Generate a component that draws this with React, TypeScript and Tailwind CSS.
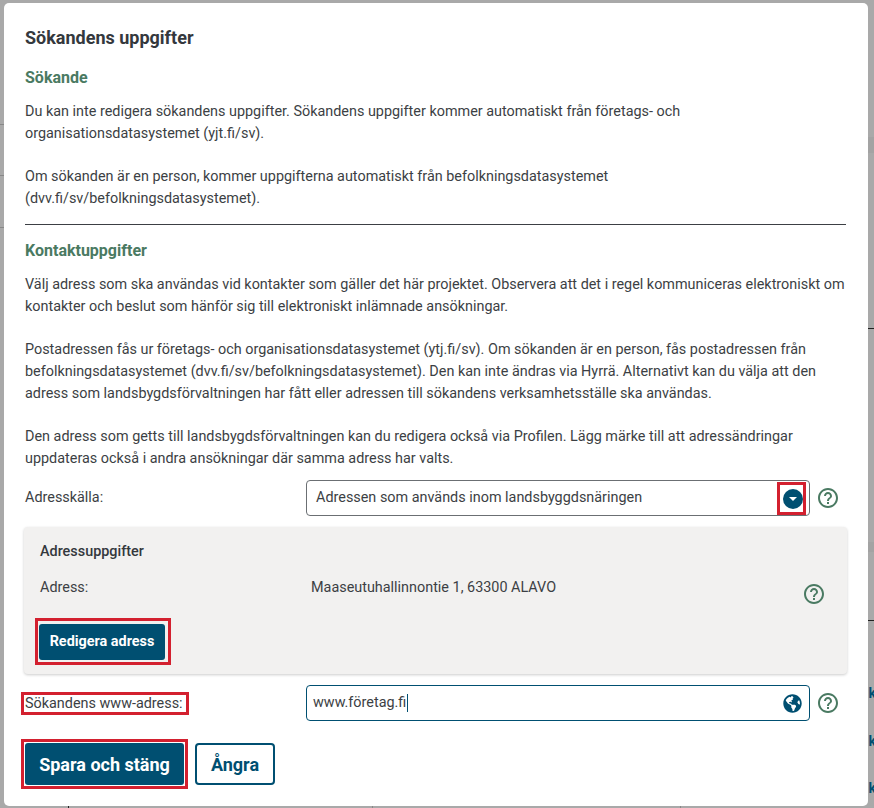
import React from "react";
import { FaGlobeAmericas } from "react-icons/fa";
import { MdHelpOutline } from "react-icons/md";

const Help = ({ className = "" }: { className?: string }) => (
  <MdHelpOutline size={24} color="#4a7a62" className={className} />
);

const P = ({ children }: { children: React.ReactNode }) => (
  <p className="text-[14.4px] leading-[22px] text-[#3c3f44]">{children}</p>
);

export default function App() {
  return (
    <div className="relative h-[808px] w-[874px] overflow-hidden bg-[#a9a9a9] font-['Roboto',sans-serif]">
      <div className="absolute -right-[2px] top-[683px] text-[14px] font-bold text-[#004f71]">k</div>
      <div className="absolute -right-[2px] top-[731px] text-[14px] font-bold text-[#004f71]">k</div>
      <div className="absolute -right-[2px] top-[778px] text-[14px] font-bold text-[#004f71]">k</div>
      <div className="absolute left-0 top-[124px] h-px w-[4px] bg-[#888]" />
      <div className="absolute left-0 top-[175px] h-px w-[4px] bg-[#888]" />
      <div className="absolute left-0 top-[227px] h-px w-[4px] bg-[#888]" />
      <div className="absolute right-0 top-[137px] h-[16px] w-[6px] bg-[#a3a3a3]" />
      <div className="absolute right-0 top-[542px] h-[10px] w-[6px] bg-[#a3a3a3]" />
      <div className="absolute right-0 top-[328px] h-px w-[6px] bg-[#222]" />
      <div className="absolute right-0 top-[620px] h-px w-[6px] bg-[#222]" />
      <div className="absolute left-[68px] top-[806px] h-[2px] w-px bg-[#222]" />
      <div className="absolute left-[372px] top-[806px] h-[2px] w-px bg-[#888]" />
      <div className="absolute left-[680px] top-[806px] h-[2px] w-px bg-[#888]" />
      <div className="absolute left-[4px] top-[3px] flex h-[803px] w-[864px] flex-col rounded-[5px] bg-white pl-[21px] pr-[22px]">
        <h1 className="mt-[24px] text-[18px] font-bold leading-[22px] text-[#34383d]">Sökandens uppgifter</h1>
        <h2 className="mt-[18px] text-[16px] font-bold leading-[22px] text-[#4a7a62]">Sökande</h2>
        <div className="mt-[12px]">
          <P>Du kan inte redigera sökandens uppgifter. Sökandens uppgifter kommer automatiskt från företags- och<br />organisationsdatasystemet (yjt.fi/sv).</P>
        </div>
        <div className="mt-[21px]">
          <P>Om sökanden är en person, kommer uppgifterna automatiskt från befolkningsdatasystemet<br />(dvv.fi/sv/befolkningsdatasystemet).</P>
        </div>
        <div className="mt-[14px] h-px w-full bg-[#3c3f44]" />
        <h2 className="mt-[15px] text-[16px] font-bold leading-[22px] text-[#4a7a62]">Kontaktuppgifter</h2>
        <div className="mt-[12px]">
          <P>Välj adress som ska användas vid kontakter som gäller det här projektet. Observera att det i regel kommuniceras elektroniskt om<br />kontakter och beslut som hänför sig till elektroniskt inlämnade ansökningar.</P>
        </div>
        <div className="mt-[21px]">
          <P>Postadressen fås ur företags- och organisationsdatasystemet (ytj.fi/sv). Om sökanden är en person, fås postadressen från<br />befolkningsdatasystemet (dvv.fi/sv/befolkningsdatasystemet). Den kan inte ändras via Hyrrä. Alternativt kan du välja att den<br />adress som landsbygdsförvaltningen har fått eller adressen till sökandens verksamhetsställe ska användas.</P>
        </div>
        <div className="mt-[21px]">
          <P>Den adress som getts till landsbygdsförvaltningen kan du redigera också via Profilen. Lägg märke till att adressändringar<br />uppdateras också i andra ansökningar där samma adress har valts.</P>
        </div>

        <div className="mt-[10px] flex h-[36px] items-center">
          <span className="w-[281px] text-[14.4px] text-[#3c3f44]">Adresskälla:</span>
          <div className="relative flex h-[36px] w-[504px] items-center rounded-[4px] border border-[#6b6f73] pl-[9px] text-[14.4px] text-[#3c3f44]">
            Adressen som används inom landsbyggdsnäringen
            <div className="absolute right-[3px] top-[1px] flex h-[33px] w-[29px] items-center justify-center border-[3px] border-[#d3202f]">
              <div className="ml-[3px] flex h-[20px] w-[20px] shrink-0 items-center justify-center rounded-full bg-[#004f71]">
                <div className="mt-[1px] h-0 w-0 border-x-[4px] border-t-[4px] border-x-transparent border-t-white" />
              </div>
            </div>
          </div>
          <Help className="ml-[6px]" />
        </div>

        <div className="-ml-[1px] mt-[11px] h-[147px] w-[823px] rounded-[4px] bg-[#f2f1f0] pl-[16px] pt-[15px] shadow-[0_1px_3px_rgba(0,0,0,0.2)]">
          <div className="text-[14.4px] font-medium leading-[20px] text-[#34383d]">Adressuppgifter</div>
          <div className="mt-[16px] flex h-[20px] items-center text-[14.4px] text-[#3c3f44]">
            <span className="w-[271px]">Adress:</span>
            <span>Maaseutuhallinnontie 1, 63300 ALAVO</span>
          </div>
          <div className="relative">
            <Help className="absolute left-[762px] -top-[16px]" />
          </div>
          <div className="-ml-[5px] mt-[20px] inline-flex border-[3px] border-[#d3202f] pb-[2px] pl-[1px] pr-[3px] pt-[3px]">
            <button className="h-[36px] w-[126px] rounded-[3px] bg-[#004f71] text-[14.4px] font-bold text-white">Redigera adress</button>
          </div>
        </div>

        <div className="mt-[11px] flex h-[36px] items-center">
          <div className="w-[281px]">
            <span className="-ml-[4px] inline-block h-[23px] border-[3px] border-[#d3202f] pl-[1px] pr-[3px] text-[14.4px] leading-[17px] text-[#3c3f44]">Sökandens www-adress:</span>
          </div>
          <div className="flex h-[36px] w-[504px] items-center justify-between rounded-[4px] border border-[#004f71] pl-[6px] pr-[7px] text-[14.4px] text-[#3c3f44]">
            <span className="flex items-center">www.företag.fi<span className="ml-px inline-block h-[18px] w-px bg-[#004f71]" /></span>
            <FaGlobeAmericas size={19} color="#004f71" />
          </div>
          <Help className="ml-[6px]" />
        </div>

        <div className="mt-[18px] flex items-center">
          <div className="-ml-[4px] flex border-[3px] border-[#d3202f] p-[1px]">
            <button className="h-[42px] w-[159px] rounded-[3px] bg-[#004f71] text-[18px] font-bold text-white">Spara och stäng</button>
          </div>
          <button className="ml-[7px] h-[42px] w-[80px] rounded-[4px] border-2 border-[#004f71] bg-white text-[18px] font-bold text-[#004f71]">Ångra</button>
        </div>
      </div>
    </div>
  );
}
